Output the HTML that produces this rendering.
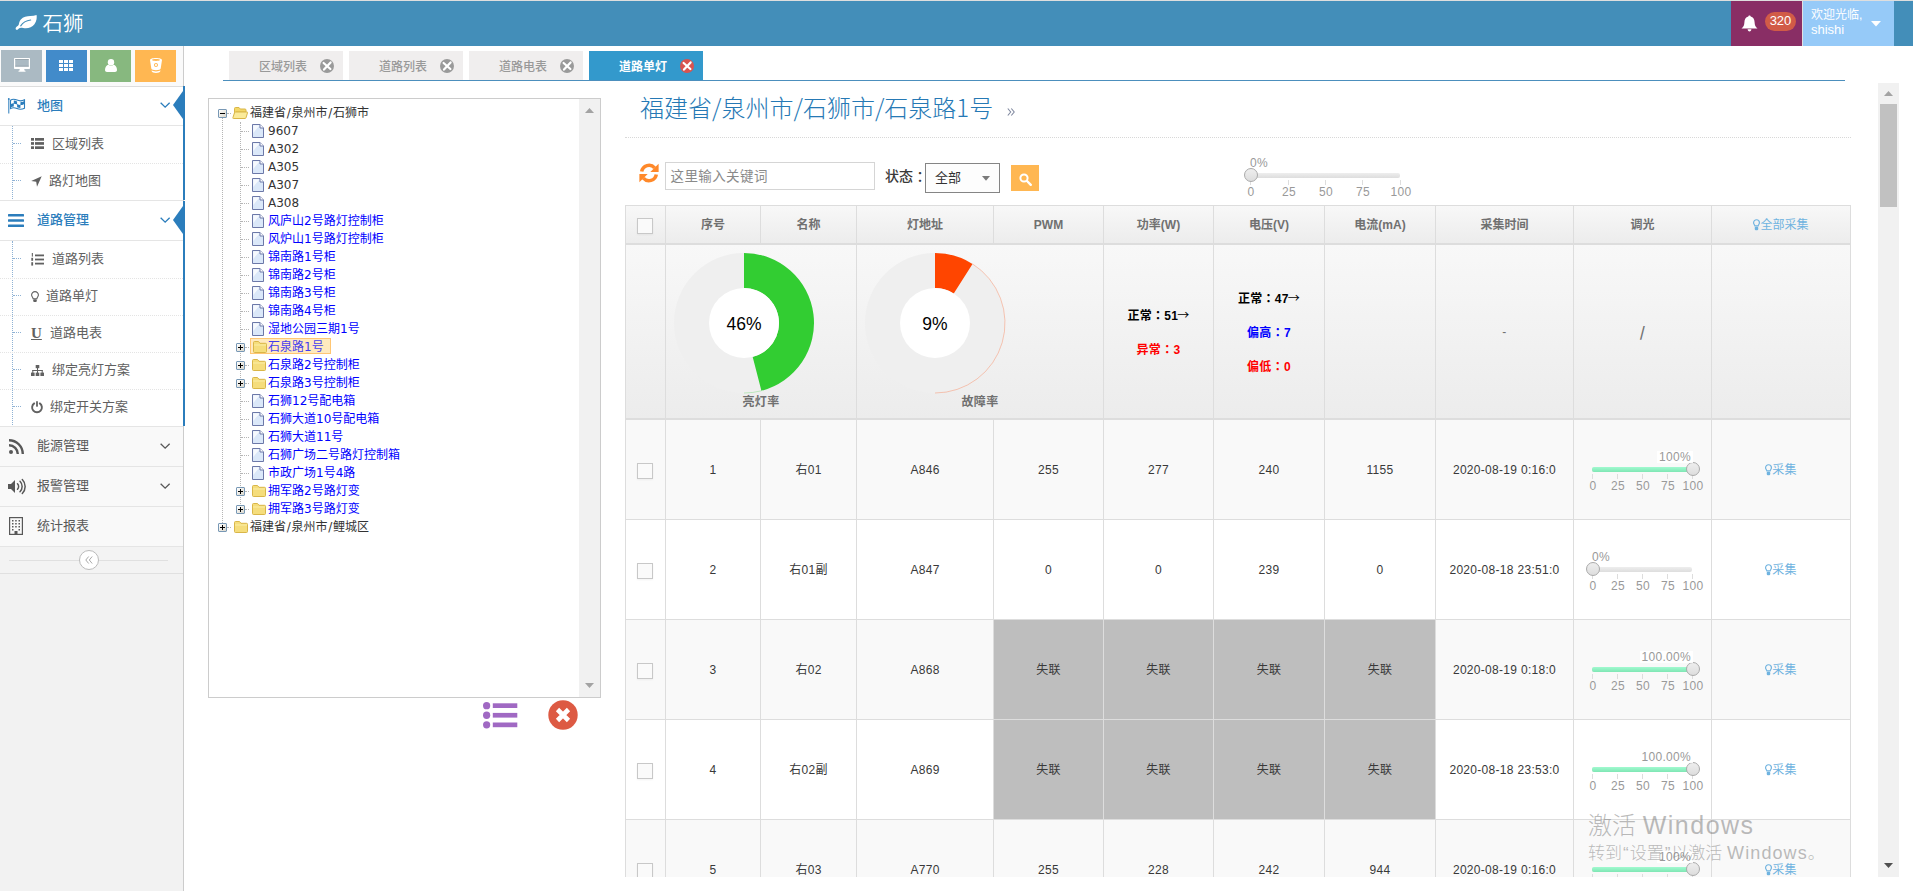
<!DOCTYPE html><html lang="zh-CN"><head><meta charset="utf-8"><title>石狮</title><style>
*{box-sizing:border-box;margin:0;padding:0}
html,body{width:1913px;height:891px;overflow:hidden;background:#fff}
body{position:relative;font-family:"Liberation Sans","Noto Sans CJK SC",sans-serif;font-size:13px;color:#393939}
.a{position:absolute}
.t{position:absolute;white-space:nowrap}
svg{position:absolute;display:block;overflow:visible}
#nav{left:0;top:1px;width:1913px;height:45px;background:#438eb9}
#side{left:0;top:46px;width:184px;height:845px;background:#f2f2f2;border-right:1px solid #ccc}
.m1{left:0;width:183px;font-size:13px;color:#585858;background:#f9f9f9}
.m1.on{background:#fff;color:#2b7dbc;font-weight:500}
.m1 .t{left:37px;top:0}
.sub{left:0;width:183px;background:#fff;font-size:13px;color:#616161}
.hl{left:0;width:183px;height:1px;background:#e5e5e5}
.dl{left:0;width:183px;height:0;border-top:1px dotted #e4e4e4}
.tab{top:51px;width:114px;height:29px;background:#f0eeee;color:#999;font-size:12px;line-height:29px}
.tab.on{background:#3399cc;color:#fff;font-weight:bold}
.tab .t{left:30px;top:2px;font-weight:500}
.tab.on .t{font-weight:bold}
#tree{left:208px;top:98px;width:393px;height:600px;border:1px solid #ccc;background:#fff}
.tr{position:absolute;height:18px;line-height:18px;font-size:12px;white-space:nowrap;font-family:"DejaVu Sans","Noto Sans CJK SC",sans-serif;color:#333}
.tr.b{color:#00f}
.vd{position:absolute;width:0;border-left:1px dotted #b5b5b5}
.hd{position:absolute;height:0;border-top:1px dotted #b5b5b5}
.pm{position:absolute;width:9px;height:9px;border:1px solid #7898b5;border-radius:1px;background:linear-gradient(135deg,#fff,#d9d6cb)}
.pm:before{content:"";position:absolute;left:1px;top:3px;width:5px;height:1px;background:#000}
.pm.p:after{content:"";position:absolute;left:3px;top:1px;width:1px;height:5px;background:#000}
  .th{position:absolute;top:207px;height:37px;line-height:37px;text-align:center;font-weight:bold;font-size:12px;color:#707070}
.c{position:absolute;text-align:center;font-size:12px;color:#393939;white-space:nowrap;letter-spacing:.3px}
.j{font-family:"Noto Sans CJK JP",sans-serif}
.j2{position:relative;top:1px}
.vl{position:absolute;width:1px;background:#ddd}
.rl{position:absolute;left:625px;width:1226px;height:1px;background:#ddd}
.cb{position:absolute;left:637px;width:16px;height:16px;border:1px solid #c8c8c8;background:#fafafa;box-shadow:0 1px 2px rgba(0,0,0,.05)}
.sl{position:absolute;font-size:12px;color:#999}
.sl .bk{position:absolute;left:0;top:0;height:5px;border-radius:2px;background:linear-gradient(#eee,#ddd)}
.sl .sel{position:absolute;left:0;top:0;height:5px;border-radius:2px;background:linear-gradient(#a1fad0,#7fe6b4)}
.sl .pt{position:absolute;top:-5px;width:14px;height:14px;border-radius:7px;border:1px solid #aaa;background:linear-gradient(#eee,#ddd)}
.sl .tk{position:absolute;top:7px;width:1px;height:5px;background:#ddd}
.sl .sc{position:absolute;top:12px;width:40px;margin-left:-19px;text-align:center;line-height:14px;letter-spacing:.3px}
.sl .lb{position:absolute;top:-16px;line-height:12px;padding:0 2px;white-space:nowrap;letter-spacing:.3px}
.lk{color:#6fb3e0}
</style></head><body><div class="a" style="left:0;top:0;width:1913px;height:1px;background:#dedede"></div><div class="a" id="nav"><svg style="left:15px;top:12px" width="22.500" height="19" viewBox="0 0 22 18"><path d="M21 1.2c.6 2.6.3 6.600-2 9.600-2.500 3.300-7 4.500-11 3.600-1.600-.4-2.800-.600-3.900.200-.8.700-1.300 1.600-2.200 1.600-1.300 0-1.700-1.600-.8-2.600.9-1 2.300-1.500 2.600-2.700.400-1.600.600-3.300 2-4.900 2.300-2.600 6-3.200 9.300-3.400 2.300-.1 4.300-.4 6-1z" fill="#fff"/><path d="M5.600 12.300c2-3.300 5.500-5.300 9.700-5.800" stroke="#438eb9" stroke-width="1.100" fill="none" stroke-linecap="round"/></svg><div class="t" style="left:42.500px;top:9px;font-size:20.500px;line-height:28px;color:#fff;font-weight:350">石狮</div><div class="a" style="left:1731px;top:0;width:71px;height:45px;background:#892e65"></div><svg style="left:1741px;top:14px" width="17" height="17" viewBox="0 0 17 17"><path d="M8.500 0.500c.7 0 1.200.5 1.200 1.100 2.600.7 3.800 2.900 3.900 5.600.1 3 .9 4.700 2.900 6.300H.5c2-1.600 2.800-3.300 2.900-6.300.1-2.700 1.300-4.900 3.900-5.600 0-.6.500-1.100 1.200-1.100z" fill="#fff"/><path d="M6.600 14.300h3.800c0 1.200-.8 2.200-1.900 2.200s-1.900-1-1.900-2.200z" fill="#fff"/></svg><div class="a" style="left:1765px;top:11px;width:31px;height:19px;border-radius:10px;background:#d15b47;color:#fff;font-size:13px;line-height:17px;text-align:center">320</div><div class="a" style="left:1802px;top:0;width:1px;height:45px;background:#e1e1e1"></div><div class="a" style="left:1803px;top:0;width:91px;height:45px;background:#96caf8"></div><div class="t" style="left:1811px;top:6px;font-size:12px;line-height:16px;color:#fff">欢迎光临,</div><div class="t" style="left:1811px;top:21px;font-size:13px;line-height:16px;color:#fff">shishi</div><svg style="left:1871px;top:20px" width="10" height="6" viewBox="0 0 10 6"><path d="M0 0h10L5 5.500z" fill="#fff"/></svg></div><div class="a" id="side"><div class="a" style="left:0;top:0;width:183px;height:40px;background:#fafafa"></div><div class="a" style="left:0;top:40px;width:183px;height:1px;background:#ddd"></div><div class="a" style="left:1px;top:4px;width:41px;height:32px;background:#abbac3"><svg style="left:13px;top:8px" width="16" height="14" viewBox="0 0 16 14"><path d="M1 0h14c.6 0 1 .4 1 1v9c0 .6-.4 1-1 1H1c-.6 0-1-.4-1-1V1c0-.6.4-1 1-1zm.2 1.200v7.300h13.600V1.200z" fill="#fff" fill-rule="evenodd"/><path d="M5.800 11h4.400l.5 1.800h.8v1H4.500v-1h.8z" fill="#fff"/><rect x="1.200" y="1.200" width="13.600" height=".7" fill="#8a98a1"/><rect x="1.200" y="7.800" width="13.600" height=".7" fill="#8a98a1"/></svg></div><div class="a" style="left:46px;top:4px;width:41px;height:32px;background:#428bca"><svg style="left:13px;top:10px" width="14" height="11" viewBox="0 0 14 11" shape-rendering="crispEdges"><g fill="#fff"><rect x="0" y="0" width="4" height="3"/><rect x="5" y="0" width="4" height="3"/><rect x="10" y="0" width="4" height="3"/><rect x="0" y="4" width="4" height="3"/><rect x="5" y="4" width="4" height="3"/><rect x="10" y="4" width="4" height="3"/><rect x="0" y="8" width="4" height="3"/><rect x="5" y="8" width="4" height="3"/><rect x="10" y="8" width="4" height="3"/></g></svg></div><div class="a" style="left:90px;top:4px;width:41px;height:32px;background:#87b87f"><svg style="left:15px;top:9px" width="12" height="13" viewBox="0 0 12 13"><circle cx="6" cy="3.200" r="3.200" fill="#fff"/><path d="M0 11c0-3 1.500-5 3.500-5.300.7.600 1.500 1 2.500 1s1.800-.4 2.500-1C10.500 6 12 8 12 11c0 1.200-.8 2-2 2H2c-1.200 0-2-.8-2-2z" fill="#fff"/></svg></div><div class="a" style="left:135px;top:4px;width:41px;height:32px;background:#ffb752"><svg style="left:15px;top:8px" width="12" height="15" viewBox="0 0 12 15"><path d="M6 0c3.300 0 6 .9 6 2l-1.300 8.500c-.2 1-2.200 1.700-4.700 1.700s-4.500-.7-4.700-1.700L0 2c0-1.100 2.700-2 6-2zm0 1.100c-2.300 0-4 .4-4 .9s1.700.9 4 .9 4-.4 4-.9-1.700-.9-4-.9zM6 5c-1.100 0-2 .9-2 2s.9 2 2 2 2-.9 2-2-.9-2-2-2zm0 1c.6 0 1 .4 1 1s-.4 1-1 1-1-.4-1-1 .4-1 1-1z" fill="#fff" fill-rule="evenodd"/><path d="M1.600 12.300c.8.700 2.500 1.100 4.400 1.100s3.600-.4 4.400-1.100l-.2 1.300c-.2.800-2 1.400-4.200 1.400s-4-.6-4.200-1.400z" fill="#fff"/></svg></div><div class="a m1 on" style="top:41px;height:38px;line-height:37px"><svg style="left:8px;top:11px" width="18" height="16" viewBox="0 0 18 16"><rect x=".3" y="1" width="1" height="14.500" fill="#2b7dbc"/><circle cx=".8" cy=".9" r=".9" fill="#2b7dbc"/><path d="M2.500 2.200c2.200-1.400 4.200-1.100 6.500-.1s4.600 1.200 7.500-.3v8.400c-2.900 1.500-5.200 1.300-7.500.3s-4.300-1.300-6.500.1z" fill="none" stroke="#2b7dbc" stroke-width="1.100"/><path d="M2.500 6.200c1.200-.7 2.200-.9 3.300-.9V2.600c1.100 0 2.200.3 3.300.8v2.700c1.100.5 2.200.9 3.300.9V4.200c1.100 0 2.400-.4 4.100-1.200v3c-1.700.8-3 1.200-4.100 1.200v2.900c-1.100 0-2.200-.3-3.300-.8V6.500c-1.100-.5-2.200-.8-3.300-.8v2.800c-1.100 0-2.100.2-3.300.9z" fill="#2b7dbc"/></svg><div class="t">地图</div><svg style="left:160px;top:15px" width="10.300" height="6.600" viewBox="0 0 11 7"><path d="M0.700 0.700L5.500 5.500L10.300 0.700" stroke="#2b7dbc" stroke-width="1.400" fill="none"/></svg></div><div class="a hl" style="top:79px"></div><div class="a sub" style="top:80px;height:74px"><div class="a" style="left:12px;top:0;width:0;height:73px;border-left:1px dotted #8fb2d4"></div><div class="a" style="left:13px;top:17px;width:8px;height:0;border-top:1px dotted #8fb2d4"></div><svg style="left:31px;top:0px;margin-top:12px" width="13" height="11" viewBox="0 0 13 11"><g fill="#616161"><rect x="0" y="0" width="3" height="2.700"/><rect x="4" y="0" width="9" height="2.700"/><rect x="0" y="4.100" width="3" height="2.700"/><rect x="4" y="4.100" width="9" height="2.700"/><rect x="0" y="8.300" width="3" height="2.700"/><rect x="4" y="8.300" width="9" height="2.700"/></g></svg><div class="t" style="left:52px;top:0px;line-height:36px">区域列表</div><div class="a dl" style="top:37px"></div><div class="a" style="left:13px;top:54px;width:8px;height:0;border-top:1px dotted #8fb2d4"></div><svg style="left:31px;top:37px;margin-top:13px" width="11" height="11" viewBox="0 0 11 11"><path d="M10.700 .3L6 10.800 5.200 5.800 .2 5z" fill="#616161"/></svg><div class="t" style="left:49px;top:37px;line-height:36px">路灯地图</div></div><div class="a hl" style="top:154px"></div><div class="a m1 on" style="top:155px;height:39px;line-height:38px"><svg style="left:8px;top:13px" width="16" height="13" viewBox="0 0 16 13"><g fill="#2b7dbc"><rect y="0" width="16" height="2.600" rx=".5"/><rect y="5.200" width="16" height="2.600" rx=".5"/><rect y="10.400" width="16" height="2.600" rx=".5"/></g></svg><div class="t">道路管理</div><svg style="left:160px;top:16px" width="10.300" height="6.600" viewBox="0 0 11 7"><path d="M0.700 0.700L5.500 5.500L10.300 0.700" stroke="#2b7dbc" stroke-width="1.400" fill="none"/></svg></div><div class="a hl" style="top:194px"></div><div class="a sub" style="top:195px;height:185px"><div class="a" style="left:12px;top:0;width:0;height:184px;border-left:1px dotted #8fb2d4"></div><div class="a" style="left:13px;top:17px;width:8px;height:0;border-top:1px dotted #8fb2d4"></div><svg style="left:31px;top:0px;margin-top:12px" width="13" height="13" viewBox="0 0 13 13"><g fill="#616161"><rect x="4" y="1.500" width="9" height="1.800"/><rect x="4" y="5.600" width="9" height="1.800"/><rect x="4" y="9.700" width="9" height="1.800"/><rect x=".8" y="0" width="1.100" height="3.600"/><rect x=".3" y="4.800" width="1.800" height="3"/><rect x=".3" y="9.200" width="1.800" height="3.400"/></g></svg><div class="t" style="left:52px;top:0px;line-height:36px">道路列表</div><div class="a dl" style="top:37px"></div><div class="a" style="left:13px;top:54px;width:8px;height:0;border-top:1px dotted #8fb2d4"></div><svg style="left:31px;top:37px;margin-top:12.500px" width="8" height="12" viewBox="0 0 8 12"><path d="M4 .6a3.400 3.400 0 0 1 3.400 3.400c0 1.600-1.300 2.300-1.500 3.800H2.100C1.900 6.300.6 5.600.6 4A3.400 3.400 0 0 1 4 .6z" fill="none" stroke="#616161" stroke-width="1.100"/><rect x="2.200" y="8.300" width="3.600" height="2.600" rx=".8" fill="#616161"/></svg><div class="t" style="left:46px;top:37px;line-height:36px">道路单灯</div><div class="a dl" style="top:74px"></div><div class="a" style="left:13px;top:91px;width:8px;height:0;border-top:1px dotted #8fb2d4"></div><div class="t" style="left:31px;top:74px;line-height:36px;font-family:'Liberation Serif',serif;font-size:15px;font-weight:bold;text-decoration:underline;color:#616161">U</div><div class="t" style="left:50px;top:74px;line-height:36px">道路电表</div><div class="a dl" style="top:111px"></div><div class="a" style="left:13px;top:128px;width:8px;height:0;border-top:1px dotted #8fb2d4"></div><svg style="left:31px;top:111px;margin-top:13px" width="13" height="11" viewBox="0 0 13 11"><g fill="#616161"><rect x="4.700" y="0" width="3.600" height="3.200"/><rect x="0" y="7.600" width="3.600" height="3.400"/><rect x="4.700" y="7.600" width="3.600" height="3.400"/><rect x="9.400" y="7.600" width="3.600" height="3.400"/><rect x="6" y="3" width="1" height="5"/><rect x="1.300" y="5" width="10.400" height="1"/><rect x="1.300" y="5" width="1" height="3"/><rect x="10.700" y="5" width="1" height="3"/></g></svg><div class="t" style="left:52px;top:111px;line-height:36px">绑定亮灯方案</div><div class="a dl" style="top:148px"></div><div class="a" style="left:13px;top:165px;width:8px;height:0;border-top:1px dotted #8fb2d4"></div><svg style="left:31px;top:148px;margin-top:12px" width="12" height="12" viewBox="0 0 12 12"><path d="M3.200 2.400a4.900 4.900 0 1 0 5.600 0" fill="none" stroke="#616161" stroke-width="1.900" stroke-linecap="round"/><rect x="5.100" y="0" width="1.800" height="5.800" rx=".9" fill="#616161"/></svg><div class="t" style="left:50px;top:148px;line-height:36px">绑定开关方案</div></div><div class="a hl" style="top:380px"></div><div class="a m1" style="top:381px;height:39px;line-height:38px"><svg style="left:9px;top:12px" width="15" height="15" viewBox="0 0 15 15"><circle cx="2" cy="13" r="2" fill="#585858"/><path d="M0 6.200a8.800 8.800 0 0 1 8.800 8.800" fill="none" stroke="#585858" stroke-width="2.400"/><path d="M0 1.200A13.800 13.800 0 0 1 13.800 15" fill="none" stroke="#585858" stroke-width="2.400"/></svg><div class="t">能源管理</div><svg style="left:160px;top:16px" width="10.300" height="6.600" viewBox="0 0 11 7"><path d="M0.700 0.700L5.500 5.500L10.300 0.700" stroke="#585858" stroke-width="1.400" fill="none"/></svg></div><div class="a hl" style="top:420px"></div><div class="a m1" style="top:421px;height:39px;line-height:38px"><svg style="left:8px;top:12px" width="18" height="15" viewBox="0 0 18 15"><path d="M0 5h3l4-4v13l-4-4H0z" fill="#585858"/><path d="M9.500 4.800a3.800 3.800 0 0 1 0 5.400M12 2.300a7.400 7.400 0 0 1 0 10.400M14.300 .5a10 10 0 0 1 0 14" fill="none" stroke="#585858" stroke-width="1.500" stroke-linecap="round"/></svg><div class="t">报警管理</div><svg style="left:160px;top:16px" width="10.300" height="6.600" viewBox="0 0 11 7"><path d="M0.700 0.700L5.500 5.500L10.300 0.700" stroke="#585858" stroke-width="1.400" fill="none"/></svg></div><div class="a hl" style="top:460px"></div><div class="a m1" style="top:461px;height:39px;line-height:38px"><svg style="left:9px;top:10px" width="14" height="18" viewBox="0 0 14 18"><rect x=".6" y=".6" width="12.800" height="16.800" fill="none" stroke="#585858" stroke-width="1.200"/><g fill="#585858"><rect x="3" y="3" width="1.500" height="1.500"/><rect x="6.200" y="3" width="1.500" height="1.500"/><rect x="9.500" y="3" width="1.500" height="1.500"/><rect x="3" y="6" width="1.500" height="1.500"/><rect x="6.200" y="6" width="1.500" height="1.500"/><rect x="9.500" y="6" width="1.500" height="1.500"/><rect x="3" y="9" width="1.500" height="1.500"/><rect x="6.200" y="9" width="1.500" height="1.500"/><rect x="9.500" y="9" width="1.500" height="1.500"/><rect x="3" y="12" width="1.500" height="1.500"/><rect x="9.500" y="12" width="1.500" height="1.500"/><rect x="5.500" y="14" width="3" height="3"/></g></svg><div class="t">统计报表</div></div><div class="a hl" style="top:500px"></div><div class="a" style="left:0;top:501px;width:183px;height:26px;background:#f3f3f3"></div><div class="a" style="left:9px;top:514px;width:159px;height:1px;background:#e0e0e0"></div><div class="a" style="left:79px;top:504px;width:20px;height:20px;border-radius:10px;border:1px solid #bbb;background:#fff"><svg style="left:5px;top:5px" width="8" height="8" viewBox="0 0 8 8"><path d="M3.700 .5L.8 4l2.900 3.500M7.200 .5L4.300 4l2.900 3.500" fill="none" stroke="#aaa" stroke-width="1"/></svg></div><div class="a hl" style="top:527px;background:#e0e0e0"></div></div><div class="a" style="left:183px;top:86px;width:2px;height:114px;background:#2b7dbc"></div><div class="a" style="left:183px;top:201px;width:2px;height:225px;background:#2b7dbc"></div><svg style="left:173px;top:91px" width="10" height="28" viewBox="0 0 10 28"><path d="M10 0L0 14l10 14z" fill="#2b7dbc"/></svg><svg style="left:173px;top:206px" width="10" height="28" viewBox="0 0 10 28"><path d="M10 0L0 14l10 14z" fill="#2b7dbc"/></svg><div class="a tab" style="left:229px"><div class="t">区域列表</div><svg style="left:91px;top:8px" width="14" height="14" viewBox="0 0 14 14"><circle cx="7" cy="7" r="7" fill="#9a9a9a"/><path d="M3.600 4l6.800 6M10.600 3.400L4 10.600" stroke="#fff" stroke-width="2.200" stroke-linecap="round"/></svg></div><div class="a tab" style="left:349px"><div class="t">道路列表</div><svg style="left:91px;top:8px" width="14" height="14" viewBox="0 0 14 14"><circle cx="7" cy="7" r="7" fill="#9a9a9a"/><path d="M3.600 4l6.800 6M10.600 3.400L4 10.600" stroke="#fff" stroke-width="2.200" stroke-linecap="round"/></svg></div><div class="a tab" style="left:469px"><div class="t">道路电表</div><svg style="left:91px;top:8px" width="14" height="14" viewBox="0 0 14 14"><circle cx="7" cy="7" r="7" fill="#9a9a9a"/><path d="M3.600 4l6.800 6M10.600 3.400L4 10.600" stroke="#fff" stroke-width="2.200" stroke-linecap="round"/></svg></div><div class="a tab on" style="left:589px"><div class="t">道路单灯</div><svg style="left:91px;top:8px" width="14" height="14" viewBox="0 0 14 14"><circle cx="7" cy="7" r="7" fill="#d9534f"/><path d="M3.600 4l6.800 6M10.600 3.400L4 10.600" stroke="#fff" stroke-width="2.200" stroke-linecap="round"/></svg></div><div class="a" style="left:223px;top:80px;width:1622px;height:1px;background:#4c8fbd"></div><div class="a" id="tree"><div class="a" style="left:370px;top:0;width:21px;height:598px;background:#f1f1f1"></div><svg style="left:376px;top:9px" width="9" height="5" viewBox="0 0 9 5"><path d="M0 5L4.500 0L9 5z" fill="#a3a3a3"/></svg><svg style="left:376px;top:584px" width="9" height="5" viewBox="0 0 9 5"><path d="M0 0L4.500 5L9 0z" fill="#a3a3a3"/></svg><div class="vd" style="left:13px;top:19px;height:405px"></div><div class="vd" style="left:31px;top:23px;height:386px"></div><div class="hd" style="left:18px;top:14px;width:4px"></div><div class="pm" style="left:9px;top:10px"></div><svg style="left:23px;top:8px" width="16" height="12" viewBox="0 0 16 12"><path d="M2.500 1.500q0-1 1-1h3.500l1.300 1.500h4.700q1 0 1 1v2H4L2.500 9z" fill="#f3d766" stroke="#d9b648" stroke-width="1"/><path d="M3.500 5h11.500q.8 0 .5 .8l-1.500 5q-.3.700-1 .7H1.500q-.9 0-.6-.8l1.600-5q.3-.7 1-.7z" fill="#fbeb9a" stroke="#d9b648" stroke-width="1"/></svg><div class="tr" style="left:41px;top:5px">福建省<span style="padding:0 .7px">/</span>泉州市<span style="padding:0 .7px">/</span>石狮市</div><div class="hd" style="left:32px;top:32px;width:8px"></div><svg style="left:43px;top:25px" width="12" height="14" viewBox="0 0 12 14"><path d="M.5 .5h7.500l3.500 3.500v9.500H.5z" fill="#dbe8f9" stroke="#6c78a8" stroke-width="1"/><path d="M1.200 1.200h6.500L1.200 9z" fill="#fff" opacity=".75"/><path d="M8 .5v3.500h3.500" fill="#fff" stroke="#6c78a8" stroke-width="1"/></svg><div class="tr" style="left:59px;top:23px">9607</div><div class="hd" style="left:32px;top:50px;width:8px"></div><svg style="left:43px;top:43px" width="12" height="14" viewBox="0 0 12 14"><path d="M.5 .5h7.500l3.500 3.500v9.500H.5z" fill="#dbe8f9" stroke="#6c78a8" stroke-width="1"/><path d="M1.200 1.200h6.500L1.200 9z" fill="#fff" opacity=".75"/><path d="M8 .5v3.500h3.500" fill="#fff" stroke="#6c78a8" stroke-width="1"/></svg><div class="tr" style="left:59px;top:41px">A302</div><div class="hd" style="left:32px;top:68px;width:8px"></div><svg style="left:43px;top:61px" width="12" height="14" viewBox="0 0 12 14"><path d="M.5 .5h7.500l3.500 3.500v9.500H.5z" fill="#dbe8f9" stroke="#6c78a8" stroke-width="1"/><path d="M1.200 1.200h6.500L1.200 9z" fill="#fff" opacity=".75"/><path d="M8 .5v3.500h3.500" fill="#fff" stroke="#6c78a8" stroke-width="1"/></svg><div class="tr" style="left:59px;top:59px">A305</div><div class="hd" style="left:32px;top:86px;width:8px"></div><svg style="left:43px;top:79px" width="12" height="14" viewBox="0 0 12 14"><path d="M.5 .5h7.500l3.500 3.500v9.500H.5z" fill="#dbe8f9" stroke="#6c78a8" stroke-width="1"/><path d="M1.200 1.200h6.500L1.200 9z" fill="#fff" opacity=".75"/><path d="M8 .5v3.500h3.500" fill="#fff" stroke="#6c78a8" stroke-width="1"/></svg><div class="tr" style="left:59px;top:77px">A307</div><div class="hd" style="left:32px;top:104px;width:8px"></div><svg style="left:43px;top:97px" width="12" height="14" viewBox="0 0 12 14"><path d="M.5 .5h7.500l3.500 3.500v9.500H.5z" fill="#dbe8f9" stroke="#6c78a8" stroke-width="1"/><path d="M1.200 1.200h6.500L1.200 9z" fill="#fff" opacity=".75"/><path d="M8 .5v3.500h3.500" fill="#fff" stroke="#6c78a8" stroke-width="1"/></svg><div class="tr" style="left:59px;top:95px">A308</div><div class="hd" style="left:32px;top:122px;width:8px"></div><svg style="left:43px;top:115px" width="12" height="14" viewBox="0 0 12 14"><path d="M.5 .5h7.500l3.500 3.500v9.500H.5z" fill="#dbe8f9" stroke="#6c78a8" stroke-width="1"/><path d="M1.200 1.200h6.500L1.200 9z" fill="#fff" opacity=".75"/><path d="M8 .5v3.500h3.500" fill="#fff" stroke="#6c78a8" stroke-width="1"/></svg><div class="tr b" style="left:59px;top:113px">风庐山2号路灯控制柜</div><div class="hd" style="left:32px;top:140px;width:8px"></div><svg style="left:43px;top:133px" width="12" height="14" viewBox="0 0 12 14"><path d="M.5 .5h7.500l3.500 3.500v9.500H.5z" fill="#dbe8f9" stroke="#6c78a8" stroke-width="1"/><path d="M1.200 1.200h6.500L1.200 9z" fill="#fff" opacity=".75"/><path d="M8 .5v3.500h3.500" fill="#fff" stroke="#6c78a8" stroke-width="1"/></svg><div class="tr b" style="left:59px;top:131px">风炉山1号路灯控制柜</div><div class="hd" style="left:32px;top:158px;width:8px"></div><svg style="left:43px;top:151px" width="12" height="14" viewBox="0 0 12 14"><path d="M.5 .5h7.500l3.500 3.500v9.500H.5z" fill="#dbe8f9" stroke="#6c78a8" stroke-width="1"/><path d="M1.200 1.200h6.500L1.200 9z" fill="#fff" opacity=".75"/><path d="M8 .5v3.500h3.500" fill="#fff" stroke="#6c78a8" stroke-width="1"/></svg><div class="tr b" style="left:59px;top:149px">锦南路1号柜</div><div class="hd" style="left:32px;top:176px;width:8px"></div><svg style="left:43px;top:169px" width="12" height="14" viewBox="0 0 12 14"><path d="M.5 .5h7.500l3.500 3.500v9.500H.5z" fill="#dbe8f9" stroke="#6c78a8" stroke-width="1"/><path d="M1.200 1.200h6.500L1.200 9z" fill="#fff" opacity=".75"/><path d="M8 .5v3.500h3.500" fill="#fff" stroke="#6c78a8" stroke-width="1"/></svg><div class="tr b" style="left:59px;top:167px">锦南路2号柜</div><div class="hd" style="left:32px;top:194px;width:8px"></div><svg style="left:43px;top:187px" width="12" height="14" viewBox="0 0 12 14"><path d="M.5 .5h7.500l3.500 3.500v9.500H.5z" fill="#dbe8f9" stroke="#6c78a8" stroke-width="1"/><path d="M1.200 1.200h6.500L1.200 9z" fill="#fff" opacity=".75"/><path d="M8 .5v3.500h3.500" fill="#fff" stroke="#6c78a8" stroke-width="1"/></svg><div class="tr b" style="left:59px;top:185px">锦南路3号柜</div><div class="hd" style="left:32px;top:212px;width:8px"></div><svg style="left:43px;top:205px" width="12" height="14" viewBox="0 0 12 14"><path d="M.5 .5h7.500l3.500 3.500v9.500H.5z" fill="#dbe8f9" stroke="#6c78a8" stroke-width="1"/><path d="M1.200 1.200h6.500L1.200 9z" fill="#fff" opacity=".75"/><path d="M8 .5v3.500h3.500" fill="#fff" stroke="#6c78a8" stroke-width="1"/></svg><div class="tr b" style="left:59px;top:203px">锦南路4号柜</div><div class="hd" style="left:32px;top:230px;width:8px"></div><svg style="left:43px;top:223px" width="12" height="14" viewBox="0 0 12 14"><path d="M.5 .5h7.500l3.500 3.500v9.500H.5z" fill="#dbe8f9" stroke="#6c78a8" stroke-width="1"/><path d="M1.200 1.200h6.500L1.200 9z" fill="#fff" opacity=".75"/><path d="M8 .5v3.500h3.500" fill="#fff" stroke="#6c78a8" stroke-width="1"/></svg><div class="tr b" style="left:59px;top:221px">湿地公园三期1号</div><div class="hd" style="left:36px;top:248px;width:4px"></div><div class="pm p" style="left:27px;top:244px"></div><div class="a" style="left:41px;top:239px;width:81px;height:16px;background:#ffe6b0;border:1px solid #ffb951;opacity:.8"></div><svg style="left:44px;top:242px" width="14" height="12" viewBox="0 0 14 12"><path d="M.5 1.500q0-1 1-1h4l1.500 1.800h5.500q1 0 1 1v7.200q0 1-1 1H1.500q-1 0-1-1z" fill="#f5dd7c" stroke="#d9b648" stroke-width="1"/><path d="M1 4h12" stroke="#fbeea6" stroke-width="1"/></svg><div class="tr b" style="left:59px;top:239px;opacity:.75">石泉路1号</div><div class="hd" style="left:36px;top:266px;width:4px"></div><div class="pm p" style="left:27px;top:262px"></div><svg style="left:43px;top:260px" width="14" height="12" viewBox="0 0 14 12"><path d="M.5 1.500q0-1 1-1h4l1.500 1.800h5.500q1 0 1 1v7.200q0 1-1 1H1.500q-1 0-1-1z" fill="#f5dd7c" stroke="#d9b648" stroke-width="1"/><path d="M1 4h12" stroke="#fbeea6" stroke-width="1"/></svg><div class="tr b" style="left:59px;top:257px">石泉路2号控制柜</div><div class="hd" style="left:36px;top:284px;width:4px"></div><div class="pm p" style="left:27px;top:280px"></div><svg style="left:43px;top:278px" width="14" height="12" viewBox="0 0 14 12"><path d="M.5 1.500q0-1 1-1h4l1.500 1.800h5.500q1 0 1 1v7.200q0 1-1 1H1.500q-1 0-1-1z" fill="#f5dd7c" stroke="#d9b648" stroke-width="1"/><path d="M1 4h12" stroke="#fbeea6" stroke-width="1"/></svg><div class="tr b" style="left:59px;top:275px">石泉路3号控制柜</div><div class="hd" style="left:32px;top:302px;width:8px"></div><svg style="left:43px;top:295px" width="12" height="14" viewBox="0 0 12 14"><path d="M.5 .5h7.500l3.500 3.500v9.500H.5z" fill="#dbe8f9" stroke="#6c78a8" stroke-width="1"/><path d="M1.200 1.200h6.500L1.200 9z" fill="#fff" opacity=".75"/><path d="M8 .5v3.500h3.500" fill="#fff" stroke="#6c78a8" stroke-width="1"/></svg><div class="tr b" style="left:59px;top:293px">石狮12号配电箱</div><div class="hd" style="left:32px;top:320px;width:8px"></div><svg style="left:43px;top:313px" width="12" height="14" viewBox="0 0 12 14"><path d="M.5 .5h7.500l3.500 3.500v9.500H.5z" fill="#dbe8f9" stroke="#6c78a8" stroke-width="1"/><path d="M1.200 1.200h6.500L1.200 9z" fill="#fff" opacity=".75"/><path d="M8 .5v3.500h3.500" fill="#fff" stroke="#6c78a8" stroke-width="1"/></svg><div class="tr b" style="left:59px;top:311px">石狮大道10号配电箱</div><div class="hd" style="left:32px;top:338px;width:8px"></div><svg style="left:43px;top:331px" width="12" height="14" viewBox="0 0 12 14"><path d="M.5 .5h7.500l3.500 3.500v9.500H.5z" fill="#dbe8f9" stroke="#6c78a8" stroke-width="1"/><path d="M1.200 1.200h6.500L1.200 9z" fill="#fff" opacity=".75"/><path d="M8 .5v3.500h3.500" fill="#fff" stroke="#6c78a8" stroke-width="1"/></svg><div class="tr b" style="left:59px;top:329px">石狮大道11号</div><div class="hd" style="left:32px;top:356px;width:8px"></div><svg style="left:43px;top:349px" width="12" height="14" viewBox="0 0 12 14"><path d="M.5 .5h7.500l3.500 3.500v9.500H.5z" fill="#dbe8f9" stroke="#6c78a8" stroke-width="1"/><path d="M1.200 1.200h6.500L1.200 9z" fill="#fff" opacity=".75"/><path d="M8 .5v3.500h3.500" fill="#fff" stroke="#6c78a8" stroke-width="1"/></svg><div class="tr b" style="left:59px;top:347px">石狮广场二号路灯控制箱</div><div class="hd" style="left:32px;top:374px;width:8px"></div><svg style="left:43px;top:367px" width="12" height="14" viewBox="0 0 12 14"><path d="M.5 .5h7.500l3.500 3.500v9.500H.5z" fill="#dbe8f9" stroke="#6c78a8" stroke-width="1"/><path d="M1.200 1.200h6.500L1.200 9z" fill="#fff" opacity=".75"/><path d="M8 .5v3.500h3.500" fill="#fff" stroke="#6c78a8" stroke-width="1"/></svg><div class="tr b" style="left:59px;top:365px">市政广场1号4路</div><div class="hd" style="left:36px;top:392px;width:4px"></div><div class="pm p" style="left:27px;top:388px"></div><svg style="left:43px;top:386px" width="14" height="12" viewBox="0 0 14 12"><path d="M.5 1.500q0-1 1-1h4l1.500 1.800h5.500q1 0 1 1v7.200q0 1-1 1H1.500q-1 0-1-1z" fill="#f5dd7c" stroke="#d9b648" stroke-width="1"/><path d="M1 4h12" stroke="#fbeea6" stroke-width="1"/></svg><div class="tr b" style="left:59px;top:383px">拥军路2号路灯变</div><div class="hd" style="left:36px;top:410px;width:4px"></div><div class="pm p" style="left:27px;top:406px"></div><svg style="left:43px;top:404px" width="14" height="12" viewBox="0 0 14 12"><path d="M.5 1.500q0-1 1-1h4l1.500 1.800h5.500q1 0 1 1v7.200q0 1-1 1H1.500q-1 0-1-1z" fill="#f5dd7c" stroke="#d9b648" stroke-width="1"/><path d="M1 4h12" stroke="#fbeea6" stroke-width="1"/></svg><div class="tr b" style="left:59px;top:401px">拥军路3号路灯变</div><div class="hd" style="left:18px;top:428px;width:4px"></div><div class="pm p" style="left:9px;top:424px"></div><svg style="left:25px;top:422px" width="14" height="12" viewBox="0 0 14 12"><path d="M.5 1.500q0-1 1-1h4l1.500 1.800h5.500q1 0 1 1v7.200q0 1-1 1H1.500q-1 0-1-1z" fill="#f5dd7c" stroke="#d9b648" stroke-width="1"/><path d="M1 4h12" stroke="#fbeea6" stroke-width="1"/></svg><div class="tr" style="left:41px;top:419px">福建省<span style="padding:0 .7px">/</span>泉州市<span style="padding:0 .7px">/</span>鲤城区</div></div><svg style="left:483px;top:701.500px" width="34.300" height="26.500" viewBox="0 0 35 27"><g fill="#a069c3"><circle cx="3.700" cy="3.700" r="3.700"/><circle cx="3.700" cy="13.500" r="3.700"/><circle cx="3.700" cy="23.300" r="3.700"/><rect x="10" y="1.300" width="25" height="4.800"/><rect x="10" y="11.100" width="25" height="4.800"/><rect x="10" y="20.900" width="25" height="4.800"/></g></svg><svg style="left:548px;top:700px" width="30" height="30" viewBox="0 0 30 30"><circle cx="15" cy="15" r="14.700" fill="#dd5a43"/><path d="M9.500 9.500l11 11M20.500 9.500l-11 11" stroke="#fff" stroke-width="4.600"/></svg><div class="t" style="left:640px;top:90px;font-size:24px;line-height:34px;font-weight:300;color:#2679b5;font-family:'Noto Sans CJK SC','Liberation Sans',sans-serif">福建省/泉州市/石狮市/石泉路1号</div><svg style="left:1007px;top:108px" width="8" height="8" viewBox="0 0 8 8"><path d="M.8 .5L3.700 4 .8 7.500M4.300 .5L7.200 4 4.300 7.500" fill="none" stroke="#8089a0" stroke-width="1.100"/></svg><div class="a" style="left:625px;top:137px;width:1226px;height:0;border-top:1px dotted #d8d8d8"></div><svg style="left:639px;top:163px" width="20" height="20" viewBox="0 0 20 20"><path d="M2.700 8.600A7.400 7.400 0 0 1 15.600 4.900" fill="none" stroke="#ff892a" stroke-width="3.500"/><path d="M19.600 .8v8.300h-8.300z" fill="#ff892a"/><path d="M17.300 11.400A7.400 7.400 0 0 1 4.400 15.100" fill="none" stroke="#ff892a" stroke-width="3.500"/><path d="M.4 19.200v-8.300h8.300z" fill="#ff892a"/></svg><div class="a" style="left:665px;top:162px;width:210px;height:28px;border:1px solid #d5d5d5;background:#fff"><div class="t" style="left:4.500px;top:0;line-height:27px;font-size:13.500px;letter-spacing:.4px;color:#8a8a8a">这里输入关键词</div></div><div class="t" style="left:885px;top:162px;line-height:26px;font-size:14px;color:#393939;font-weight:500">状态<span class="j j2" lang="ja">：</span></div><div class="a" style="left:925px;top:163px;width:75px;height:30px;border:1px solid #858585;border-radius:0;background:#fdfdfd"><div class="t" style="left:9px;top:0;line-height:28px;font-size:13px;color:#333">全部</div><svg style="left:56px;top:12px" width="8" height="5" viewBox="0 0 8 5"><path d="M0 0h8L4 4.800z" fill="#7b7b7b"/></svg></div><div class="a" style="left:1011px;top:165px;width:28px;height:26px;background:#ffb752"><svg style="left:8px;top:8px" width="13" height="13" viewBox="0 0 13 13"><circle cx="5" cy="5" r="3.600" fill="none" stroke="#fff" stroke-width="2"/><path d="M8 8l3.800 3.800" stroke="#fff" stroke-width="2.400" stroke-linecap="round"/></svg></div><div class="sl" style="left:1250px;top:173px;width:150px"><div class="bk" style="width:150px"></div><div class="tk" style="left:0px"></div><div class="sc" style="left:0px">0</div><div class="tk" style="left:38px"></div><div class="sc" style="left:38px">25</div><div class="tk" style="left:75px"></div><div class="sc" style="left:75px">50</div><div class="tk" style="left:112px"></div><div class="sc" style="left:112px">75</div><div class="tk" style="left:150px"></div><div class="sc" style="left:150px">100</div><div class="pt" style="left:-6px"></div><div class="lb" style="left:-2px">0%</div></div><div class="a" style="left:625px;top:205px;width:1226px;height:39px;background:linear-gradient(#f8f8f8,#ececec)"></div><div class="a" style="left:625px;top:245px;width:1226px;height:174px;background:linear-gradient(#f8f8f8,#ececec)"></div><div class="a" style="left:625px;top:420px;width:1226px;height:99px;background:#f9f9f9"></div><div class="a" style="left:625px;top:520px;width:1226px;height:99px;background:#fff"></div><div class="a" style="left:625px;top:620px;width:1226px;height:99px;background:#f9f9f9"></div><div class="a" style="left:625px;top:720px;width:1226px;height:99px;background:#fff"></div><div class="a" style="left:625px;top:820px;width:1226px;height:57px;background:#f9f9f9"></div><div class="a" style="left:994px;top:620px;width:441px;height:99px;background:#bebebe"></div><div class="a" style="left:994px;top:720px;width:441px;height:99px;background:#bebebe"></div><div class="rl" style="top:205px"></div><div class="rl" style="top:243px;height:2px"></div><div class="rl" style="top:418px;height:2px"></div><div class="rl" style="top:519px"></div><div class="rl" style="top:619px"></div><div class="rl" style="top:719px"></div><div class="rl" style="top:819px"></div><div class="vl" style="left:625px;top:205px;height:39px"></div><div class="vl" style="left:625px;top:245px;height:174px"></div><div class="vl" style="left:625px;top:420px;height:457px"></div><div class="vl" style="left:665px;top:205px;height:39px"></div><div class="vl" style="left:665px;top:245px;height:174px"></div><div class="vl" style="left:665px;top:420px;height:457px"></div><div class="vl" style="left:760px;top:205px;height:39px"></div><div class="vl" style="left:760px;top:420px;height:457px"></div><div class="vl" style="left:856px;top:205px;height:39px"></div><div class="vl" style="left:856px;top:245px;height:174px"></div><div class="vl" style="left:856px;top:420px;height:457px"></div><div class="vl" style="left:993px;top:205px;height:39px"></div><div class="vl" style="left:993px;top:420px;height:457px"></div><div class="vl" style="left:1103px;top:205px;height:39px"></div><div class="vl" style="left:1103px;top:245px;height:174px"></div><div class="vl" style="left:1103px;top:420px;height:457px"></div><div class="vl" style="left:1213px;top:205px;height:39px"></div><div class="vl" style="left:1213px;top:245px;height:174px"></div><div class="vl" style="left:1213px;top:420px;height:457px"></div><div class="vl" style="left:1324px;top:205px;height:39px"></div><div class="vl" style="left:1324px;top:245px;height:174px"></div><div class="vl" style="left:1324px;top:420px;height:457px"></div><div class="vl" style="left:1435px;top:205px;height:39px"></div><div class="vl" style="left:1435px;top:245px;height:174px"></div><div class="vl" style="left:1435px;top:420px;height:457px"></div><div class="vl" style="left:1573px;top:205px;height:39px"></div><div class="vl" style="left:1573px;top:245px;height:174px"></div><div class="vl" style="left:1573px;top:420px;height:457px"></div><div class="vl" style="left:1711px;top:205px;height:39px"></div><div class="vl" style="left:1711px;top:245px;height:174px"></div><div class="vl" style="left:1711px;top:420px;height:457px"></div><div class="vl" style="left:1850px;top:205px;height:39px"></div><div class="vl" style="left:1850px;top:245px;height:174px"></div><div class="vl" style="left:1850px;top:420px;height:457px"></div><div class="th" style="left:666px;width:94px">序号</div><div class="th" style="left:761px;width:95px">名称</div><div class="th" style="left:857px;width:136px">灯地址</div><div class="th" style="left:994px;width:109px">PWM</div><div class="th" style="left:1104px;width:109px">功率(W)</div><div class="th" style="left:1214px;width:110px">电压(V)</div><div class="th" style="left:1325px;width:110px">电流(mA)</div><div class="th" style="left:1436px;width:137px">采集时间</div><div class="th" style="left:1574px;width:137px">调光</div><div class="th lk" style="left:1712px;width:138px;font-weight:normal"><svg style="position:relative;display:inline-block;vertical-align:-2px;margin-right:0" width="7" height="12" viewBox="0 0 6 10"><path d="M3 .5a2.500 2.500 0 0 1 2.500 2.500c0 1.200-.9 1.700-1.100 2.800H1.600C1.400 4.700.5 4.200.5 3A2.500 2.500 0 0 1 3 .5z" fill="none" stroke="#6fb3e0" stroke-width="1"/><rect x="1.500" y="6.400" width="3" height="3" rx="1" fill="#6fb3e0"/></svg>全部采集</div><div class="cb" style="top:218px"></div><svg style="left:673px;top:252px" width="142" height="142" viewBox="0 0 142 142"><circle cx="71" cy="71" r="70" fill="#efefef"/><path d="M71.00 1.00A70 70 0 0 1 88.41 138.80L79.70 104.90A35 35 0 0 0 71.00 36.00Z" fill="#32cd32"/><path d="M88.41 138.80A70 70 0 0 1 71.00 141.00" fill="none" stroke="#32cd32" stroke-width=".6" opacity=".45"/><circle cx="71" cy="71" r="35" fill="#fff"/><text x="71" y="77.500" text-anchor="middle" font-size="17.500" fill="#000" font-family="Liberation Sans,sans-serif">46%</text></svg><svg style="left:864px;top:252px" width="142" height="142" viewBox="0 0 142 142"><circle cx="71" cy="71" r="70" fill="#efefef"/><path d="M71.00 1.00A70 70 0 0 1 108.51 11.90L89.75 41.45A35 35 0 0 0 71.00 36.00Z" fill="#ff4500"/><path d="M108.51 11.90A70 70 0 0 1 71.00 141.00" fill="none" stroke="#ff4500" stroke-width=".6" opacity=".45"/><circle cx="71" cy="71" r="35" fill="#fff"/><text x="71" y="77.500" text-anchor="middle" font-size="17.500" fill="#000" font-family="Liberation Sans,sans-serif">9%</text></svg><div class="c" style="left:666px;top:393px;width:190px;line-height:18px;color:#707070;font-weight:bold">亮灯率</div><div class="c" style="left:857px;top:393px;width:246px;line-height:18px;color:#707070;font-weight:bold">故障率</div><div class="c" style="left:1104px;top:306px;width:109px;line-height:18px;font-weight:bold;color:#000">正常<span class="j" lang="ja">：</span>51<span class="j" style="font-weight:normal;margin-left:-1px">→</span></div><div class="c" style="left:1104px;top:340px;width:109px;line-height:18px;font-weight:bold;color:#f00">异常<span class="j" lang="ja">：</span>3</div><div class="c" style="left:1214px;top:289px;width:110px;line-height:18px;font-weight:bold;color:#000">正常<span class="j" lang="ja">：</span>47<span class="j" style="font-weight:normal;margin-left:-1px">→</span></div><div class="c" style="left:1214px;top:323px;width:110px;line-height:18px;font-weight:bold;color:#00f">偏高<span class="j" lang="ja">：</span>7</div><div class="c" style="left:1214px;top:357px;width:110px;line-height:18px;font-weight:bold;color:#f00">偏低<span class="j" lang="ja">：</span>0</div><div class="c" style="left:1436px;top:323px;width:137px;line-height:18px;color:#707070">-</div><div class="c" style="left:1574px;top:322px;width:137px;line-height:18px;color:#707070;font-weight:bold;font-size:14px;font-family:'Noto Sans CJK SC','Liberation Sans',sans-serif">/</div><div class="a" style="left:0;top:0;width:1913px;height:877px;overflow:hidden"><div class="cb" style="top:463px"></div><div class="c" style="left:666px;top:460px;width:94px;line-height:20px">1</div><div class="c" style="left:761px;top:460px;width:95px;line-height:20px">右01</div><div class="c" style="left:857px;top:460px;width:136px;line-height:20px">A846</div><div class="c" style="left:994px;top:460px;width:109px;line-height:20px">255</div><div class="c" style="left:1104px;top:460px;width:109px;line-height:20px">277</div><div class="c" style="left:1214px;top:460px;width:110px;line-height:20px">240</div><div class="c" style="left:1325px;top:460px;width:110px;line-height:20px">1155</div><div class="c" style="left:1436px;top:460px;width:137px;line-height:20px">2020-08-19 0:16:0</div><div class="sl" style="left:1592px;top:467px;width:100px"><div class="bk" style="width:100px"></div><div class="sel" style="width:100px"></div><div class="tk" style="left:0px"></div><div class="sc" style="left:0px">0</div><div class="tk" style="left:25px"></div><div class="sc" style="left:25px">25</div><div class="tk" style="left:50px"></div><div class="sc" style="left:50px">50</div><div class="tk" style="left:75px"></div><div class="sc" style="left:75px">75</div><div class="tk" style="left:100px"></div><div class="sc" style="left:100px">100</div><div class="pt" style="left:94px"></div><div class="lb" style="right:-1px;background:rgba(255,255,255,.9)">100%</div></div><div class="c lk" style="left:1712px;top:460px;width:138px;line-height:20px"><svg style="position:relative;display:inline-block;vertical-align:-2px;margin-right:0" width="7" height="12" viewBox="0 0 6 10"><path d="M3 .5a2.500 2.500 0 0 1 2.500 2.500c0 1.200-.9 1.700-1.100 2.800H1.600C1.400 4.700.5 4.200.5 3A2.500 2.500 0 0 1 3 .5z" fill="none" stroke="#6fb3e0" stroke-width="1"/><rect x="1.500" y="6.400" width="3" height="3" rx="1" fill="#6fb3e0"/></svg>采集</div><div class="cb" style="top:563px"></div><div class="c" style="left:666px;top:560px;width:94px;line-height:20px">2</div><div class="c" style="left:761px;top:560px;width:95px;line-height:20px">右01副</div><div class="c" style="left:857px;top:560px;width:136px;line-height:20px">A847</div><div class="c" style="left:994px;top:560px;width:109px;line-height:20px">0</div><div class="c" style="left:1104px;top:560px;width:109px;line-height:20px">0</div><div class="c" style="left:1214px;top:560px;width:110px;line-height:20px">239</div><div class="c" style="left:1325px;top:560px;width:110px;line-height:20px">0</div><div class="c" style="left:1436px;top:560px;width:137px;line-height:20px">2020-08-18 23:51:0</div><div class="sl" style="left:1592px;top:567px;width:100px"><div class="bk" style="width:100px"></div><div class="tk" style="left:0px"></div><div class="sc" style="left:0px">0</div><div class="tk" style="left:25px"></div><div class="sc" style="left:25px">25</div><div class="tk" style="left:50px"></div><div class="sc" style="left:50px">50</div><div class="tk" style="left:75px"></div><div class="sc" style="left:75px">75</div><div class="tk" style="left:100px"></div><div class="sc" style="left:100px">100</div><div class="pt" style="left:-6px"></div><div class="lb" style="left:-2px">0%</div></div><div class="c lk" style="left:1712px;top:560px;width:138px;line-height:20px"><svg style="position:relative;display:inline-block;vertical-align:-2px;margin-right:0" width="7" height="12" viewBox="0 0 6 10"><path d="M3 .5a2.500 2.500 0 0 1 2.500 2.500c0 1.200-.9 1.700-1.100 2.800H1.600C1.400 4.700.5 4.200.5 3A2.500 2.500 0 0 1 3 .5z" fill="none" stroke="#6fb3e0" stroke-width="1"/><rect x="1.500" y="6.400" width="3" height="3" rx="1" fill="#6fb3e0"/></svg>采集</div><div class="cb" style="top:663px"></div><div class="c" style="left:666px;top:660px;width:94px;line-height:20px">3</div><div class="c" style="left:761px;top:660px;width:95px;line-height:20px">右02</div><div class="c" style="left:857px;top:660px;width:136px;line-height:20px">A868</div><div class="c" style="left:994px;top:660px;width:109px;line-height:20px">失联</div><div class="c" style="left:1104px;top:660px;width:109px;line-height:20px">失联</div><div class="c" style="left:1214px;top:660px;width:110px;line-height:20px">失联</div><div class="c" style="left:1325px;top:660px;width:110px;line-height:20px">失联</div><div class="c" style="left:1436px;top:660px;width:137px;line-height:20px">2020-08-19 0:18:0</div><div class="sl" style="left:1592px;top:667px;width:100px"><div class="bk" style="width:100px"></div><div class="sel" style="width:100px"></div><div class="tk" style="left:0px"></div><div class="sc" style="left:0px">0</div><div class="tk" style="left:25px"></div><div class="sc" style="left:25px">25</div><div class="tk" style="left:50px"></div><div class="sc" style="left:50px">50</div><div class="tk" style="left:75px"></div><div class="sc" style="left:75px">75</div><div class="tk" style="left:100px"></div><div class="sc" style="left:100px">100</div><div class="pt" style="left:94px"></div><div class="lb" style="right:-1px;background:rgba(255,255,255,.9)">100.00%</div></div><div class="c lk" style="left:1712px;top:660px;width:138px;line-height:20px"><svg style="position:relative;display:inline-block;vertical-align:-2px;margin-right:0" width="7" height="12" viewBox="0 0 6 10"><path d="M3 .5a2.500 2.500 0 0 1 2.500 2.500c0 1.200-.9 1.700-1.100 2.800H1.600C1.400 4.700.5 4.200.5 3A2.500 2.500 0 0 1 3 .5z" fill="none" stroke="#6fb3e0" stroke-width="1"/><rect x="1.500" y="6.400" width="3" height="3" rx="1" fill="#6fb3e0"/></svg>采集</div><div class="cb" style="top:763px"></div><div class="c" style="left:666px;top:760px;width:94px;line-height:20px">4</div><div class="c" style="left:761px;top:760px;width:95px;line-height:20px">右02副</div><div class="c" style="left:857px;top:760px;width:136px;line-height:20px">A869</div><div class="c" style="left:994px;top:760px;width:109px;line-height:20px">失联</div><div class="c" style="left:1104px;top:760px;width:109px;line-height:20px">失联</div><div class="c" style="left:1214px;top:760px;width:110px;line-height:20px">失联</div><div class="c" style="left:1325px;top:760px;width:110px;line-height:20px">失联</div><div class="c" style="left:1436px;top:760px;width:137px;line-height:20px">2020-08-18 23:53:0</div><div class="sl" style="left:1592px;top:767px;width:100px"><div class="bk" style="width:100px"></div><div class="sel" style="width:100px"></div><div class="tk" style="left:0px"></div><div class="sc" style="left:0px">0</div><div class="tk" style="left:25px"></div><div class="sc" style="left:25px">25</div><div class="tk" style="left:50px"></div><div class="sc" style="left:50px">50</div><div class="tk" style="left:75px"></div><div class="sc" style="left:75px">75</div><div class="tk" style="left:100px"></div><div class="sc" style="left:100px">100</div><div class="pt" style="left:94px"></div><div class="lb" style="right:-1px;background:rgba(255,255,255,.9)">100.00%</div></div><div class="c lk" style="left:1712px;top:760px;width:138px;line-height:20px"><svg style="position:relative;display:inline-block;vertical-align:-2px;margin-right:0" width="7" height="12" viewBox="0 0 6 10"><path d="M3 .5a2.500 2.500 0 0 1 2.500 2.500c0 1.200-.9 1.700-1.100 2.800H1.600C1.400 4.700.5 4.200.5 3A2.500 2.500 0 0 1 3 .5z" fill="none" stroke="#6fb3e0" stroke-width="1"/><rect x="1.500" y="6.400" width="3" height="3" rx="1" fill="#6fb3e0"/></svg>采集</div><div class="cb" style="top:863px"></div><div class="c" style="left:666px;top:860px;width:94px;line-height:20px">5</div><div class="c" style="left:761px;top:860px;width:95px;line-height:20px">右03</div><div class="c" style="left:857px;top:860px;width:136px;line-height:20px">A770</div><div class="c" style="left:994px;top:860px;width:109px;line-height:20px">255</div><div class="c" style="left:1104px;top:860px;width:109px;line-height:20px">228</div><div class="c" style="left:1214px;top:860px;width:110px;line-height:20px">242</div><div class="c" style="left:1325px;top:860px;width:110px;line-height:20px">944</div><div class="c" style="left:1436px;top:860px;width:137px;line-height:20px">2020-08-19 0:16:0</div><div class="sl" style="left:1592px;top:867px;width:100px"><div class="bk" style="width:100px"></div><div class="sel" style="width:100px"></div><div class="tk" style="left:0px"></div><div class="sc" style="left:0px">0</div><div class="tk" style="left:25px"></div><div class="sc" style="left:25px">25</div><div class="tk" style="left:50px"></div><div class="sc" style="left:50px">50</div><div class="tk" style="left:75px"></div><div class="sc" style="left:75px">75</div><div class="tk" style="left:100px"></div><div class="sc" style="left:100px">100</div><div class="pt" style="left:94px"></div><div class="lb" style="right:-1px;background:rgba(255,255,255,.9)">100%</div></div><div class="c lk" style="left:1712px;top:860px;width:138px;line-height:20px"><svg style="position:relative;display:inline-block;vertical-align:-2px;margin-right:0" width="7" height="12" viewBox="0 0 6 10"><path d="M3 .5a2.500 2.500 0 0 1 2.500 2.500c0 1.200-.9 1.700-1.100 2.800H1.600C1.400 4.700.5 4.200.5 3A2.500 2.500 0 0 1 3 .5z" fill="none" stroke="#6fb3e0" stroke-width="1"/><rect x="1.500" y="6.400" width="3" height="3" rx="1" fill="#6fb3e0"/></svg>采集</div></div><div class="a" style="left:1878px;top:83px;width:21px;height:794px;background:#f1f1f1"></div><div class="a" style="left:1880px;top:104px;width:17px;height:103px;background:#c1c1c1"></div><svg style="left:1884px;top:91px" width="9" height="5" viewBox="0 0 9 5"><path d="M0 5L4.500 0L9 5z" fill="#a3a3a3"/></svg><svg style="left:1884px;top:863px" width="9" height="5" viewBox="0 0 9 5"><path d="M0 0L4.500 5L9 0z" fill="#505050"/></svg><div class="a" style="left:185px;top:877px;width:1728px;height:14px;background:#fff"></div><div class="t" style="left:1588px;top:808px;font-size:24px;line-height:34px;color:rgba(120,120,120,.5);font-weight:300">激活 <span style="letter-spacing:1.5px;font-size:25px">Windows</span></div><div class="t" style="left:1588px;top:841px;font-size:17px;line-height:24px;color:rgba(120,120,120,.5);font-weight:300">转到<span style="padding:0 1px">“</span>设置<span style="padding:0 1px">”</span>以激活 <span style="letter-spacing:1.1px;font-size:18px">Windows</span>。</div></body></html>
